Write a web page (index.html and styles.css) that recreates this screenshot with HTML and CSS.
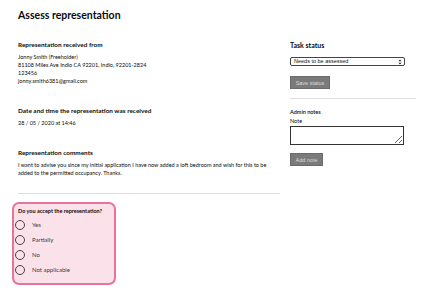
FILE: index.html
```html
<!DOCTYPE html>
<html lang="en">
<head>
  <meta charset="UTF-8">
  <meta name="viewport" content="width=device-width, initial-scale=1.0">
  <link rel="stylesheet" href="styles.css">
  <title>Assess representation</title>
</head>
<body>
  <h1 class="page_title">Assess representation</h1>

  <div class="layout">
    <div class="main_col">
      <div class="detail">
        <h3>Representation received from</h3>
        <p>Jonny Smith (Freeholder)<br>
        81108 Miles Ave Indio CA 92201, Indio, 92201-2824<br>
        123456<br>
        jonny.smith6381@gmail.com</p>
      </div>

      <div class="detail">
        <h3>Date and time the representation was received</h3>
        <p>28 / 05 / 2020 at 14:46</p>
      </div>

      <div class="detail">
        <h3>Representation comments</h3>
        <p>I want to advise you since my initial application I have now added a loft bedroom and wish for this to be added to the permitted occupancy. Thanks.</p>
      </div>

      <hr class="divider">

      <div class="accept_box">
        <p class="accept_question">Do you accept the representation?</p>
        <label class="radio_row"><input type="radio" name="accept"><span class="radio_mark"></span>Yes</label>
        <label class="radio_row"><input type="radio" name="accept"><span class="radio_mark"></span>Partially</label>
        <label class="radio_row"><input type="radio" name="accept"><span class="radio_mark"></span>No</label>
        <label class="radio_row"><input type="radio" name="accept"><span class="radio_mark"></span>Not applicable</label>
      </div>
    </div>

    <div class="side_col">
      <h2 class="side_title">Task status</h2>
      <div class="select_wrap">
        <select class="status_select">
          <option>Needs to be assessed</option>
        </select>
        <svg class="select_arrows" width="4" height="6" viewBox="0 0 4 6">
          <path d="M0.5 2.3 L2 0.6 L3.5 2.3 Z M0.5 3.7 L2 5.4 L3.5 3.7 Z" fill="#222"/>
        </svg>
      </div>
      <button class="grey_button save_status">Save status</button>

      <hr class="divider side_divider">

      <h3 class="notes_title">Admin notes</h3>
      <label class="note_label" for="note">Note</label>
      <textarea id="note" class="note_input"></textarea>
      <button class="grey_button add_note">Add note</button>
    </div>
  </div>
</body>
</html>
```

FILE: styles.css
```css
/* Basics */
body {
  margin: 0;
  padding: 8px 18px 0 18px;
  font-family: Lato, "Noto Sans", sans-serif;
  color: #0b0c0c;
  background-color: #ffffff;
}

h1, h2, h3, p {
  margin: 0;
}

/* Page Title */
.page_title {
  font-size: 10.5px;
  line-height: 14px;
  font-weight: bold;
}

.layout {
  display: flex;
  gap: 10px;
  align-items: flex-start;
}

.main_col {
  width: 262px;
}

.side_col {
  width: 126px;
  display: flex;
  flex-direction: column;
  align-items: flex-start;
  padding-top: 18px;
}

/* Details */
.detail {
  margin-top: 19px;
  font-size: 5.5px;
  line-height: 8px;
}

.detail + .detail {
  margin-top: 22px;
}

.detail h3 {
  font-weight: bold;
  margin-bottom: 4px;
}

.divider {
  border: none;
  border-top: 1px solid #dddddd;
  margin: 16px 0 0 0;
  width: 262px;
}

/* Accept box */
.accept_box {
  margin: 8px 0 0 -6px;
  width: 95px;
  padding: 3px 4px 6px 1px;
  border: 2px solid #e8739f;
  border-radius: 7px;
  background-color: #fbe2ea;
  font-size: 5.5px;
  line-height: 8px;
}

.accept_question {
  font-weight: bold;
  padding-left: 3px;
  margin-bottom: 2px;
}

.radio_row {
  display: flex;
  align-items: center;
  gap: 7px;
  height: 15px;
  font-size: 6px;
  color: #3a3a3a;
}

.radio_row input {
  display: none;
}

.radio_mark {
  width: 8px;
  height: 8px;
  border: 1.5px solid #4c3e48;
  border-radius: 50%;
  background-color: #fbe2ea;
}

/* Side column */
.side_title {
  font-size: 7px;
  line-height: 10px;
  font-weight: bold;
}

.select_wrap {
  position: relative;
  margin-top: 7px;
}

.status_select {
  display: block;
  appearance: none;
  width: 115px;
  height: 9px;
  padding: 0 3px;
  font-family: "Liberation Sans", Arial, sans-serif;
  font-size: 5.5px;
  line-height: 7px;
  color: #111111;
  border: 1px solid #444444;
  border-radius: 2px;
  background-color: #ffffff;
}

.select_arrows {
  position: absolute;
  right: 3px;
  top: 1.5px;
}

.grey_button {
  font-family: "Liberation Sans", Arial, sans-serif;
  font-size: 5.5px;
  white-space: nowrap;
  color: #dcdcdc;
  background-color: #7a7a7a;
  border: 1px solid #6b6b6b;
  border-radius: 0;
  height: 13px;
  padding: 0;
}

.save_status {
  margin-top: 10px;
  width: 40px;
}

.side_divider {
  width: 126px;
  margin-top: 9px;
}

.notes_title {
  margin-top: 9px;
  font-size: 5.5px;
  line-height: 8px;
  font-weight: 600;
}

.note_label {
  margin-top: 1px;
  font-size: 5.5px;
  line-height: 8px;
}

.note_input {
  margin-top: 1px;
  width: 114px;
  height: 19px;
  box-sizing: border-box;
  border: 1px solid #333333;
  resize: vertical;
  padding: 1px;
}

.add_note {
  margin-top: 8px;
  width: 33px;
}
```
